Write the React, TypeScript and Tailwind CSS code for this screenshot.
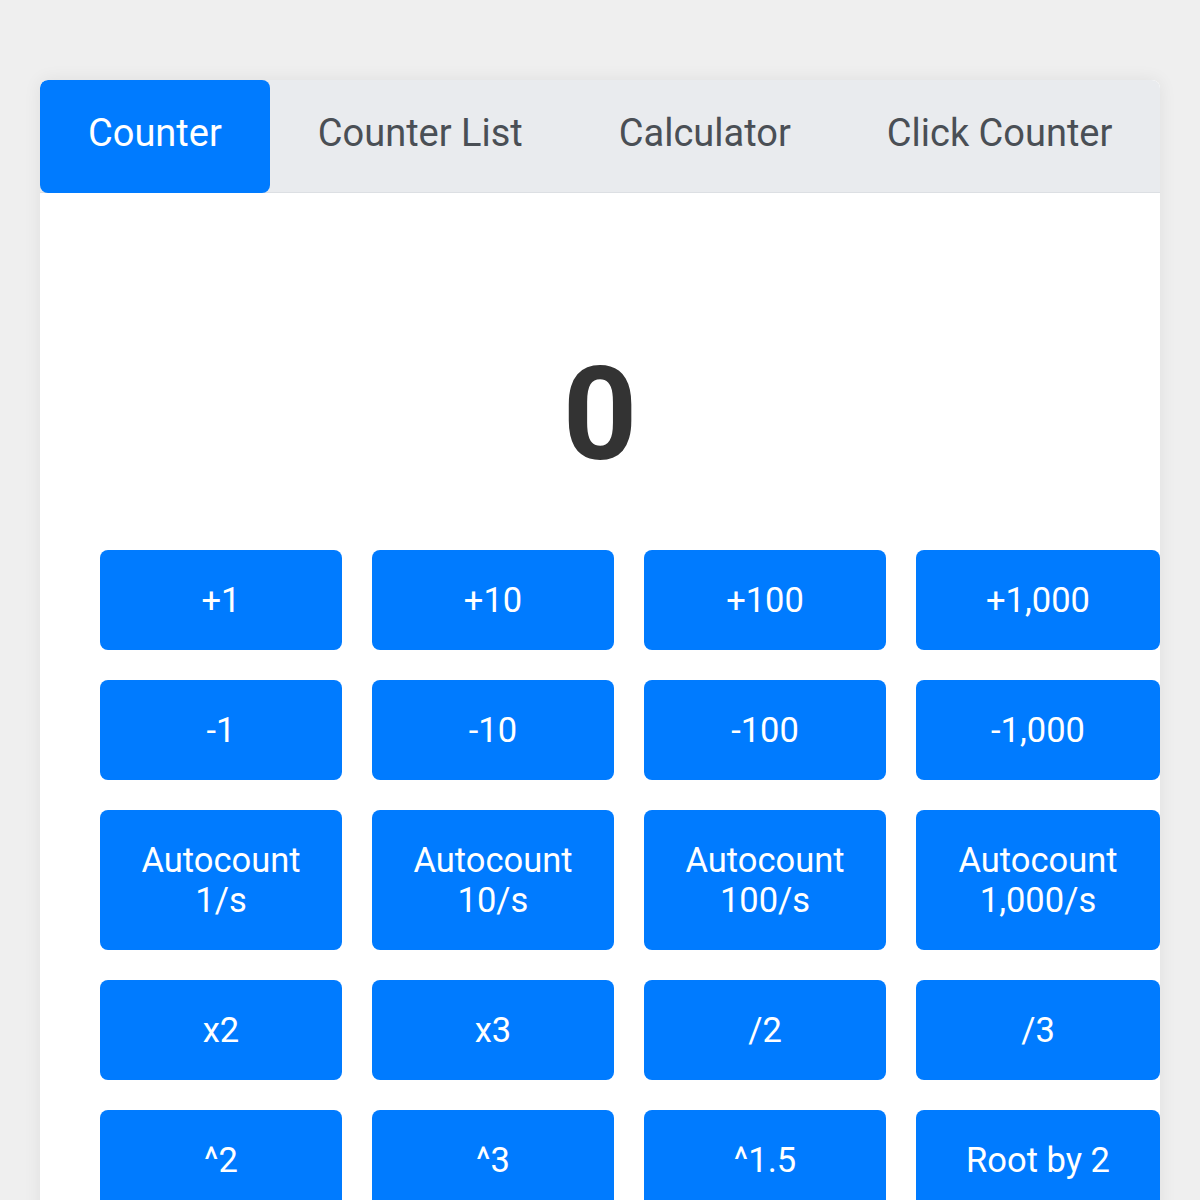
import React from "react";

const tabs = ["Counter", "Counter List", "Calculator", "Click Counter"];

const buttons: string[][] = [
  ["+1"],
  ["+10"],
  ["+100"],
  ["+1,000"],
  ["-1"],
  ["-10"],
  ["-100"],
  ["-1,000"],
  ["Autocount", "1/s"],
  ["Autocount", "10/s"],
  ["Autocount", "100/s"],
  ["Autocount", "1,000/s"],
  ["x2"],
  ["x3"],
  ["/2"],
  ["/3"],
  ["^2"],
  ["^3"],
  ["^1.5"],
  ["Root by 2"],
];

export default function App() {
  return (
    <div
      className="min-h-[1200px] h-[1200px] overflow-hidden bg-[#efefef] pt-[80px] px-[40px]"
      style={{ fontFamily: "Roboto, 'Noto Sans', sans-serif" }}
    >
      <div className="bg-white rounded-t-[8px] shadow-[0_0_18px_rgba(0,0,0,0.07)] overflow-hidden h-[1200px]">
        <div className="flex bg-[#e9ebee] border-b border-[#dcdfe3] rounded-t-[8px]">
          {tabs.map((t, i) => (
            <div
              key={t}
              className={
                "px-[48px] pt-[33px] pb-[39px] text-[38px] leading-[40px] whitespace-nowrap " +
                (i === 0
                  ? "bg-[#007bff] text-white rounded-[8px] -mb-px"
                  : "text-[#4a4f55]")
              }
            >
              {t}
            </div>
          ))}
        </div>
        <div className="pl-[60px] pt-[157px]">
          <div className="text-center text-[130px] leading-[130px] font-bold text-[#333333] pr-[60px]">
            0
          </div>
          <div className="grid grid-cols-[242px_242px_242px_1fr] gap-[30px] mt-[70px]">
            {buttons.map((b, i) => (
              <div
                key={i}
                className="bg-[#007bff] text-white rounded-[8px] py-[30px] text-center text-[34.5px] leading-[40px]"
              >
                {b.map((line, j) => (
                  <div key={j}>{line}</div>
                ))}
              </div>
            ))}
          </div>
        </div>
      </div>
    </div>
  );
}
